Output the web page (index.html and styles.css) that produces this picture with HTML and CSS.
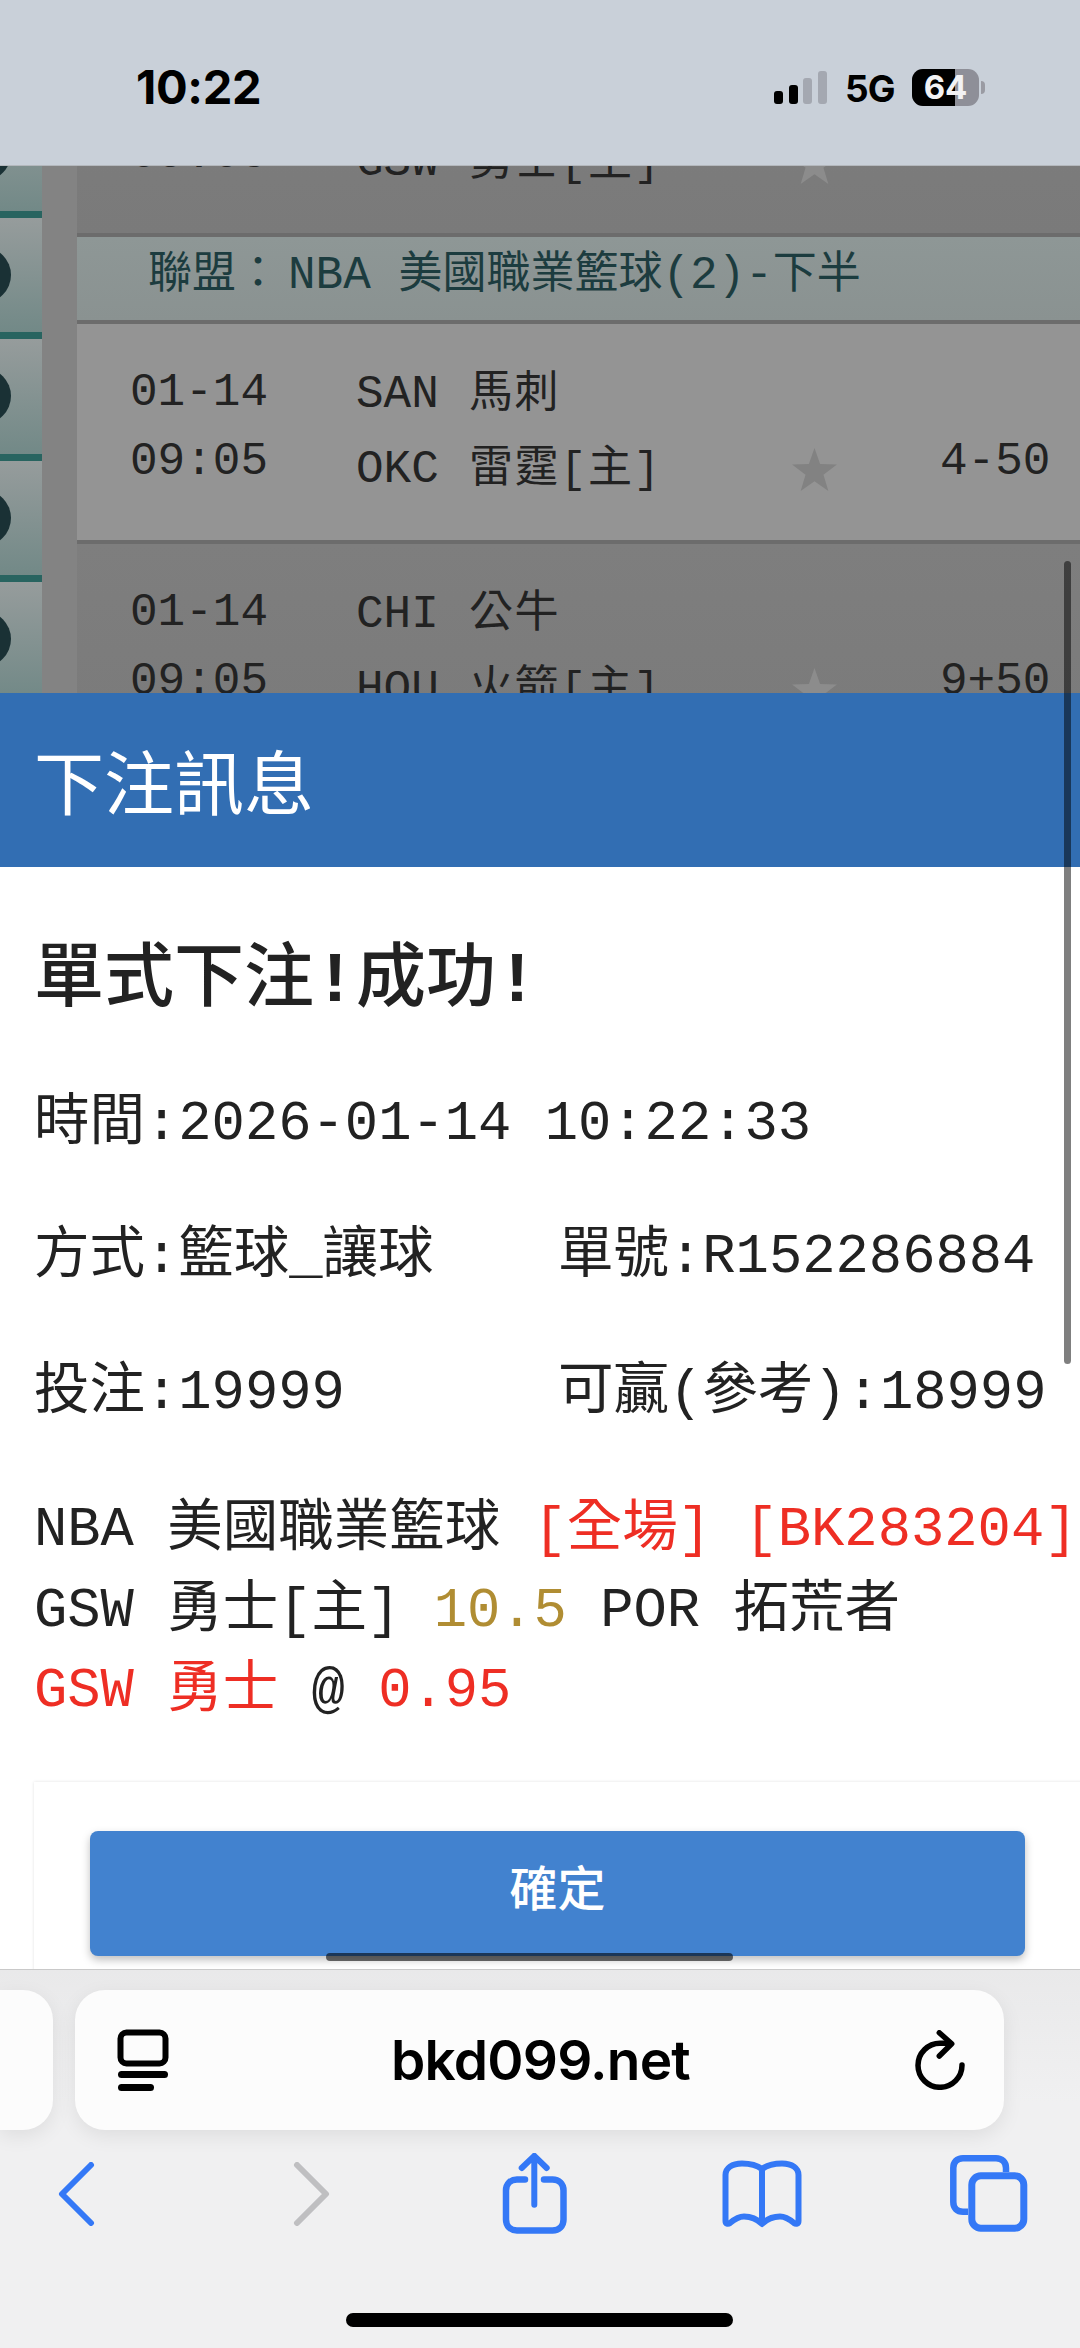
FILE: index.html
```html
<!DOCTYPE html>
<html lang="zh-Hant">
<head>
<meta charset="utf-8">
<title>下注訊息</title>
<link rel="stylesheet" href="styles.css">
</head>
<body>
<div class="app">
  <header class="status">
    <span class="clock">10:22</span>
    <div class="status-right">
      <svg class="signal" width="53" height="33" viewBox="0 0 53 33"><rect x="0" y="20" width="9" height="13" rx="3" fill="#000"/><rect x="15" y="14" width="9" height="19" rx="3" fill="#000"/><rect x="29" y="7" width="9" height="26" rx="3" fill="#a4a8b1"/><rect x="44" y="0" width="9" height="33" rx="3" fill="#a4a8b1"/></svg>
      <span class="net">5G</span>
      <div class="battery"><span class="battery-fill"></span><span class="battery-num">64</span></div>
      <span class="battery-nub"></span>
    </div>
  </header>

  <section class="backdrop">
    <div class="strip">
      <div class="strip-cell"><i></i></div>
      <div class="strip-cell"><i></i></div>
      <div class="strip-cell"><i></i></div>
      <div class="strip-cell"><i></i></div>
      <div class="strip-cell"><i></i></div>
    </div>
    <div class="gutter"></div>
    <div class="games">
      <div class="game dark">
        <div class="g-date"><br>09:05</div>
        <div class="g-team"><br><span class="code">GSW</span>勇士[主]</div>
        <div class="g-star"><svg width="45" height="43" viewBox="0 0 24 23"><path d="M12 0l3 8.600 9 .2-7.200 5.500 2.600 8.700L12 17.800 4.600 23l2.600-8.700L0 8.800l9-.2z" fill="#8c8c8c"/></svg></div>
        <div class="g-score"></div>
      </div>
      <div class="league">聯盟：<span class="lg-code">NBA</span><span class="lg-mono"> </span>美國職業籃球<span class="lg-mono">(2)-</span>下半</div>
      <div class="game light">
        <div class="g-date">01-14<br>09:05</div>
        <div class="g-team"><span class="code">SAN</span>馬刺<br><span class="code">OKC</span>雷霆[主]</div>
        <div class="g-star"><svg width="45" height="43" viewBox="0 0 24 23"><path d="M12 0l3 8.600 9 .2-7.200 5.500 2.600 8.700L12 17.800 4.600 23l2.600-8.700L0 8.800l9-.2z" fill="#828282"/></svg></div>
        <div class="g-score">4-50</div>
      </div>
      <div class="game dark">
        <div class="g-date">01-14<br>09:05</div>
        <div class="g-team"><span class="code">CHI</span>公牛<br><span class="code">HOU</span>火箭[主]</div>
        <div class="g-star"><svg width="45" height="43" viewBox="0 0 24 23"><path d="M12 0l3 8.600 9 .2-7.200 5.500 2.600 8.700L12 17.800 4.600 23l2.600-8.700L0 8.800l9-.2z" fill="#8c8c8c"/></svg></div>
        <div class="g-score">9+50</div>
      </div>
    </div>
  </section>

  <section class="sheet">
    <h1 class="sheet-head">下注訊息</h1>
    <div class="sheet-body">
      <h2 class="result">單式下注<span class="bang">!</span>成功<span class="bang">!</span></h2>
      <p class="line when">時間:2026-01-14 10:22:33</p>
      <div class="pair first"><span>方式:籃球_讓球</span><span>單號:R152286884</span></div>
      <div class="pair"><span>投注:19999</span><span>可贏(參考):18999</span></div>
      <div class="detail">
        <div>NBA 美國職業籃球 <span class="red">[全場] [BK283204]</span></div>
        <div>GSW 勇士[主] <span class="gold">10.5</span> POR 拓荒者</div>
        <div><span class="red">GSW 勇士</span> @ <span class="red">0.95</span></div>
      </div>
      <div class="card"><button class="ok" type="button">確定</button></div>
    </div>
    <span class="scroll-h"></span>
  </section>

  <footer class="toolbar">
    <div class="address-row">
      <div class="tab-peek"></div>
      <div class="address">
        <svg class="ic-tabs" width="52" height="62" viewBox="0 0 52 62"><rect x="3.500" y="3.500" width="45" height="31" rx="6" fill="none" stroke="#000" stroke-width="6"/><rect x="1" y="42" width="50" height="7" rx="3.500" fill="#000"/><rect x="1" y="55" width="36" height="7" rx="3.500" fill="#000"/></svg>
        <span class="url">bkd099.net</span>
        <svg class="ic-reload" width="50" height="60" viewBox="0 0 50 60"><path d="M47 35A22 22 0 1 1 25 13.300H35" fill="none" stroke="#000" stroke-width="5.500" stroke-linecap="round"/><path d="M24.300 2.800L36.700 13.700 24.300 26" fill="none" stroke="#000" stroke-width="5.500" stroke-linecap="round" stroke-linejoin="round"/></svg>
      </div>
    </div>
    <nav class="nav">
      <svg width="37" height="64" viewBox="0 0 37 64"><path d="M33 3L4 32l29 29" fill="none" stroke="#3478f6" stroke-width="6" stroke-linecap="round" stroke-linejoin="round"/></svg>
      <svg width="37" height="64" viewBox="0 0 37 64"><path d="M4 3l29 29L4 61" fill="none" stroke="#bfbfc1" stroke-width="6" stroke-linecap="round" stroke-linejoin="round"/></svg>
      <svg width="66" height="82" viewBox="0 0 66 82"><path d="M23 26.500H15C8.500 26.500 4 31 4 37.500V66.500C4 73 8.500 77.500 15 77.500H50.500C57 77.500 61.500 73 61.500 66.500V37.500C61.500 31 57 26.500 50.500 26.500H42" fill="none" stroke="#3478f6" stroke-width="6.500" stroke-linecap="round"/><path d="M32.300 51.700V3M19.700 15L32.300 2.800 44.700 15" fill="none" stroke="#3478f6" stroke-width="6" stroke-linecap="round" stroke-linejoin="round"/></svg>
      <svg width="80" height="68" viewBox="0 0 80 68"><path d="M40 9C34 4.500 27 3.500 20 3.500 10 3.500 3.500 8 3.500 15V61C3.500 64 6 64.500 8 63 14 58 18 56.500 22 56.500 29 56.500 35 59 40 64 45 59 51 56.500 58 56.500 62 56.500 66 58 72 63 74 64.500 76.500 64 76.500 61V15C76.500 8 70 3.500 60 3.500 53 3.500 46 4.500 40 9ZM40 9V64" fill="none" stroke="#3478f6" stroke-width="6" stroke-linejoin="round"/></svg>
      <svg width="78" height="78" viewBox="0 0 78 78"><path d="M56 17V13C56 7 52 3.300 46 3.300H13C7 3.300 3.300 7 3.300 13V47C3.300 53 7 56.700 13 56.700H18" fill="none" stroke="#3478f6" stroke-width="6.500"/><rect x="21.800" y="20.800" width="52" height="52.400" rx="9" fill="none" stroke="#3478f6" stroke-width="7"/></svg>
    </nav>
    <span class="home"></span>
  </footer>
  <span class="scroll-v"></span>
</div>
</body>
</html>
```

FILE: styles.css
```css
* { box-sizing: border-box; }
html, body { margin: 0; padding: 0; }
body { font-family: "Liberation Mono", "Noto Sans CJK TC", monospace; background: #fff; }
.app { width: 1080px; height: 2348px; display: flex; flex-direction: column; overflow: hidden; position: relative; }

.status { height: 166px; flex: none; background: #c9d0d9; display: flex; justify-content: space-between; padding: 69px 95px 0 136px; position: relative; z-index: 2; border-bottom: 1px solid #b4b8bd; }
.clock { font: 700 47px/36px "Inter", sans-serif; letter-spacing: -.3px; color: #000; }
.status-right { display: flex; align-items: flex-start; height: 37px; }
.signal { margin-top: 2px; }
.net { font: 700 37px/39px "Inter", sans-serif; margin-left: 18px; color: #000; letter-spacing: -1px; width: 49px; }
.battery { width: 67px; height: 37px; margin-left: 18px; border-radius: 11px; background: #8e8f98; overflow: hidden; position: relative; display: flex; align-items: center; justify-content: center; }
.battery-fill { position: absolute; left: 0; top: 0; bottom: 0; width: 43px; background: #000; }
.battery-num { position: relative; font: 700 33px/37px "Inter", sans-serif; color: #f2f2f4; }
.battery-nub { width: 4px; height: 13px; margin: 12px 0 0 2px; background: #9a9ba3; border-radius: 0 4px 4px 0; }

.backdrop { height: 527px; flex: none; display: flex; overflow: hidden; background: #838383; }
.strip { width: 42px; flex: none; margin-top: -70px; }
.strip-cell { height: 121.500px; background: linear-gradient(#969c9c, #728987); border-bottom: 7px solid #286460; display: flex; align-items: center; overflow: hidden; }
.strip-cell i { width: 56px; height: 56px; flex: none; margin-left: -45px; border-radius: 50%; background: #1a3135; }
.gutter { width: 35px; flex: none; }
.games { flex: 1; margin-top: -153px; font-size: 46px; color: #222; min-width: 0; }
.game { height: 220px; border-top: 4px solid #6c6c6c; display: flex; padding: 32px 0 0 53px; }
.game.dark { background: linear-gradient(#7e7e7e, #7a7a7a); }
.game.light { background: #949494; }
.g-date { width: 226px; flex: none; line-height: 69px; margin-top: 3px; }
.g-team { width: 436px; flex: none; font-size: 44px; line-height: 75px; white-space: nowrap; margin-top: 2px; letter-spacing: 1.500px; }
.code { display: inline-block; width: 113px; font-size: 46px; letter-spacing: 0; }
.g-star { width: 45px; flex: none; padding-top: 92px; }
.g-star svg { display: block; }
.g-score { margin-left: 103px; padding-top: 72px; line-height: 69px; white-space: nowrap; }
.league { height: 87px; border-top: 4px solid #6c6c6c; background: linear-gradient(#8e9796, #8a9291); color: #1c3c3f; font-size: 44px; line-height: 79px; padding-left: 71px; white-space: pre; }
.lg-code { font-size: 46px; margin-left: 8px; }
.lg-mono { font-size: 46px; }

.sheet { flex: none; height: 1276px; display: flex; flex-direction: column; position: relative; background: #fff; overflow: hidden; }
.sheet-head { margin: 0; height: 174px; flex: none; background: #326eb3; color: #fff; font: 400 70px/174px "Noto Sans CJK TC", sans-serif; padding-left: 34px; }
.sheet-body { flex: 1; padding: 76px 0 0 34px; color: #222; font-size: 55.500px; line-height: 80px; white-space: nowrap; min-height: 0; }
.result { margin: 0; font-size: 70px; line-height: 80px; font-weight: 500; }
.bang { font-weight: 700; }
.line { margin: 62px 0 0; }
.pair { display: grid; grid-template-columns: 524px 1fr; margin-top: 56px; }
.pair.first { margin-top: 53px; }
.detail { margin-top: 57px; line-height: 80.500px; }
.red { color: #ee2e24; }
.gold { color: #b08d33; }
.card { margin: 49px -60px 0 0; padding: 49px 0 40px 56px; background: #fff; box-shadow: 0 0 3px rgba(0, 0, 0, .12); }
.ok { display: block; width: 935px; height: 125px; border: 0; border-radius: 8px; background: #4282cf; color: #fff; font: 500 48px/1 "Noto Sans CJK TC", sans-serif; padding: 0 0 16px; box-shadow: 0 4px 8px rgba(0, 0, 0, .25); }
.scroll-v { position: absolute; left: 1064px; top: 561px; width: 7px; height: 803px; border-radius: 4px; background: rgba(0, 0, 0, .5); }
.scroll-h { position: absolute; left: 326px; top: 1260px; width: 407px; height: 8px; border-radius: 4px; background: rgba(0, 0, 0, .58); }

.toolbar { flex: 1; min-height: 0; background: linear-gradient(#e9e9ea, #f0f0f1 35%, #f0f0f1); border-top: 1px solid #c9c9c9; position: relative; display: flex; flex-direction: column; }
.address-row { display: flex; padding-top: 20px; height: 161px; flex: none; }
.tab-peek { width: 53px; height: 140px; flex: none; background: #fcfcfc; border-radius: 0 30px 30px 0; box-shadow: 0 6px 20px rgba(0, 0, 0, .08); }
.address { width: 929px; height: 140px; margin-left: 22px; flex: none; background: #fcfcfc; border-radius: 30px; box-shadow: 0 6px 20px rgba(0, 0, 0, .08); display: flex; align-items: center; padding: 0 39px 0 42px; justify-content: space-between; }
.url { font: 600 55px/1 "Inter", sans-serif; color: #000; letter-spacing: -.8px; margin-right: 3px; }
.nav { display: grid; grid-template-columns: 235px 209px 220px 228px auto; align-items: center; padding-left: 58px; margin-top: 22px; height: 82px; }
.nav svg { display: block; }
.home { position: absolute; left: 346px; top: 343px; width: 387px; height: 14px; border-radius: 7px; background: #000; }
```
